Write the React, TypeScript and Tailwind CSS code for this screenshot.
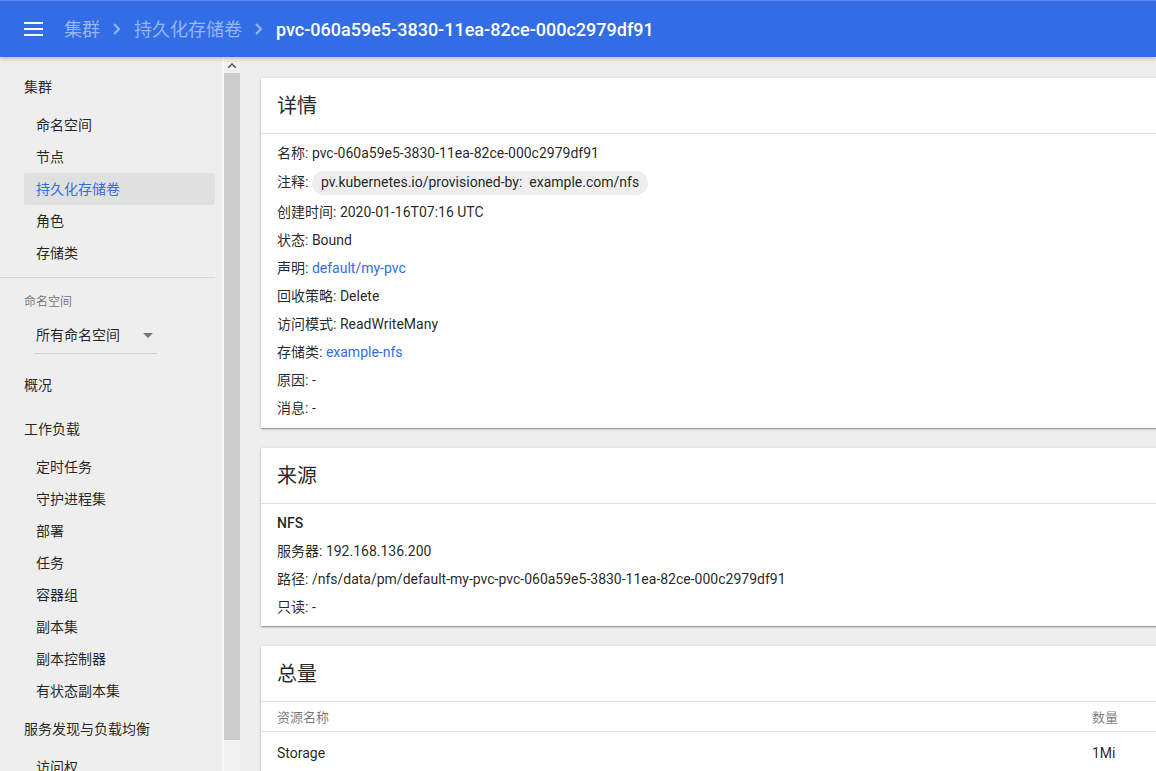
import React from "react";

const font = "font-['Roboto','Noto_Sans_CJK_SC',sans-serif]";

const clusterItems = ["命名空间", "节点", "持久化存储卷", "角色", "存储类"];
const workloadItems = ["定时任务", "守护进程集", "部署", "任务", "容器组", "副本集", "副本控制器", "有状态副本集"];

const NavItem: React.FC<{ label: string; active?: boolean }> = ({ label, active }) => (
  <div
    className={`h-[32px] ml-[24px] mr-[7px] pl-[12px] flex items-center text-[14px] rounded-[2px] ${
      active ? "bg-[#e0e0e0] text-[#326de6]" : "text-[rgba(0,0,0,0.87)]"
    }`}
  >
    {label}
  </div>
);

const Card: React.FC<{ title: string; children: React.ReactNode }> = ({ title, children }) => (
  <div className="bg-white shadow-[0_1px_3px_rgba(0,0,0,0.2),0_1px_1px_rgba(0,0,0,0.14),0_2px_1px_-1px_rgba(0,0,0,0.12)] mb-[20px]">
    <div className="h-[56px] flex items-center px-[16px] border-b border-[#e0e0e0] text-[20px] text-[rgba(0,0,0,0.87)]">
      {title}
    </div>
    {children}
  </div>
);

const Row: React.FC<{ label: string; children: React.ReactNode; tall?: boolean }> = ({ label, children, tall }) => (
  <div className={`${tall ? "h-[31px]" : "h-[28px]"} flex items-center text-[14px] text-[rgba(0,0,0,0.87)]`}>
    <span>{label}:&nbsp;</span>
    {children}
  </div>
);

const Link: React.FC<{ children: React.ReactNode }> = ({ children }) => (
  <span className="text-[#326de6]">{children}</span>
);

export default function App() {
  return (
    <div className={`${font} w-[1156px] h-[771px] overflow-hidden bg-[#eeeeee] flex flex-col`}>
      {/* header */}
      <header className="h-[57px] shrink-0 bg-[#326de6] border-t border-[#5a8aee] flex items-center pl-[24px] shadow-[0_2px_4px_rgba(0,0,0,0.2)] z-10">
        <svg width="20" height="14" viewBox="0 0 20 14" className="mr-[20px]">
          <rect x="0" y="0" width="19" height="2" fill="white" />
          <rect x="0" y="6" width="19" height="2" fill="white" />
          <rect x="0" y="12" width="19" height="2" fill="white" />
        </svg>
        <span className="text-[18px] text-[#98b6f2]">集群</span>
        <svg width="34" height="20" viewBox="0 0 34 20">
          <path d="M14 5 L19 10 L14 15" stroke="#98b6f2" strokeWidth="2" fill="none" />
        </svg>
        <span className="text-[18px] text-[#98b6f2]">持久化存储卷</span>
        <svg width="34" height="20" viewBox="0 0 34 20">
          <path d="M14 5 L19 10 L14 15" stroke="#98b6f2" strokeWidth="2" fill="none" />
        </svg>
        <span className="text-[18px] text-white font-medium">pvc-060a59e5-3830-11ea-82ce-000c2979df91</span>
      </header>

      <div className="flex flex-1 min-h-0">
        {/* sidebar */}
        <nav className="w-[222px] shrink-0 bg-[#eeeeee] pt-[14px]">
          <div className="h-[32px] flex items-center pl-[24px] text-[14px] text-[rgba(0,0,0,0.87)]">集群</div>
          <div className="h-[6px]" />
          {clusterItems.map((l) => (
            <NavItem key={l} label={l} active={l === "持久化存储卷"} />
          ))}
          <div className="mt-[8px] mr-[7px] border-t border-[#d6d6d6]" />
          <div className="h-[32px] mt-[8px] flex items-center pl-[24px] text-[12px] text-[rgba(0,0,0,0.54)]">命名空间</div>
          <div className="ml-[34px] w-[123px] h-[36px] border-b border-[#cfcfcf] flex items-center justify-between pl-[2px] pr-[2px]">
            <span className="text-[14px] text-[rgba(0,0,0,0.87)]">所有命名空间</span>
            <svg width="10" height="5" viewBox="0 0 10 5" className="mr-[2px]">
              <path d="M0 0 L10 0 L5 5 Z" fill="#777" />
            </svg>
          </div>
          <div className="h-[32px] mt-[15px] flex items-center pl-[24px] text-[14px] text-[rgba(0,0,0,0.87)]">概况</div>
          <div className="h-[32px] mt-[12px] flex items-center pl-[24px] text-[14px] text-[rgba(0,0,0,0.87)]">工作负载</div>
          <div className="h-[6px]" />
          {workloadItems.map((l) => (
            <NavItem key={l} label={l} />
          ))}
          <div className="h-[32px] mt-[6px] flex items-center pl-[24px] text-[14px] text-[rgba(0,0,0,0.87)]">服务发现与负载均衡</div>
          <div className="h-[6px]" />
          <NavItem label="访问权" />
        </nav>

        {/* scrollbar */}
        <div className="w-[18px] shrink-0 bg-[#f1f1f1] border-l-2 border-[#f7f7f7] flex flex-col">
          <div className="h-[16px] flex items-center justify-center">
            <svg width="8" height="5" viewBox="0 0 8 5">
              <path d="M0 5 L4 1 L8 5" stroke="#555" strokeWidth="1.5" fill="none" />
            </svg>
          </div>
          <div className="h-[667px] bg-[#cdcdcd]" />
        </div>

        {/* main */}
        <main className="flex-1 min-w-0 overflow-hidden pl-[21px] pt-[21px]">
          <div className="w-[920px]">
            <Card title="详情">
              <div className="px-[16px] pt-[5px] pb-[6px]">
                <Row label="名称">pvc-060a59e5-3830-11ea-82ce-000c2979df91</Row>
                <Row label="注释" tall>
                  <span className="h-[24px] px-[9px] flex items-center rounded-full bg-[#eeeeee] text-[14px]">
                    pv.kubernetes.io/provisioned-by:&nbsp;&nbsp;example.com/nfs
                  </span>
                </Row>
                <Row label="创建时间">2020-01-16T07:16 UTC</Row>
                <Row label="状态">Bound</Row>
                <Row label="声明">
                  <Link>default/my-pvc</Link>
                </Row>
                <Row label="回收策略">Delete</Row>
                <Row label="访问模式">ReadWriteMany</Row>
                <Row label="存储类">
                  <Link>example-nfs</Link>
                </Row>
                <Row label="原因">-</Row>
                <Row label="消息">-</Row>
              </div>
            </Card>

            <Card title="来源">
              <div className="px-[16px] pt-[5px] pb-[5px]">
                <div className="h-[28px] flex items-center text-[14px] font-medium text-[rgba(0,0,0,0.87)]">NFS</div>
                <Row label="服务器">192.168.136.200</Row>
                <Row label="路径">/nfs/data/pm/default-my-pvc-pvc-060a59e5-3830-11ea-82ce-000c2979df91</Row>
                <Row label="只读">-</Row>
              </div>
            </Card>

            <Card title="总量">
              <div className="h-[30px] pt-[2px] grid grid-cols-[815px_1fr] items-center px-[16px] border-b border-[#e0e0e0] text-[13px] text-[rgba(0,0,0,0.54)]">
                <span>资源名称</span>
                <span>数量</span>
              </div>
              <div className="h-[40px] pt-[2px] grid grid-cols-[815px_1fr] items-center px-[16px] text-[14px] text-[rgba(0,0,0,0.87)]">
                <span>Storage</span>
                <span>1Mi</span>
              </div>
            </Card>
          </div>
        </main>
      </div>
    </div>
  );
}
